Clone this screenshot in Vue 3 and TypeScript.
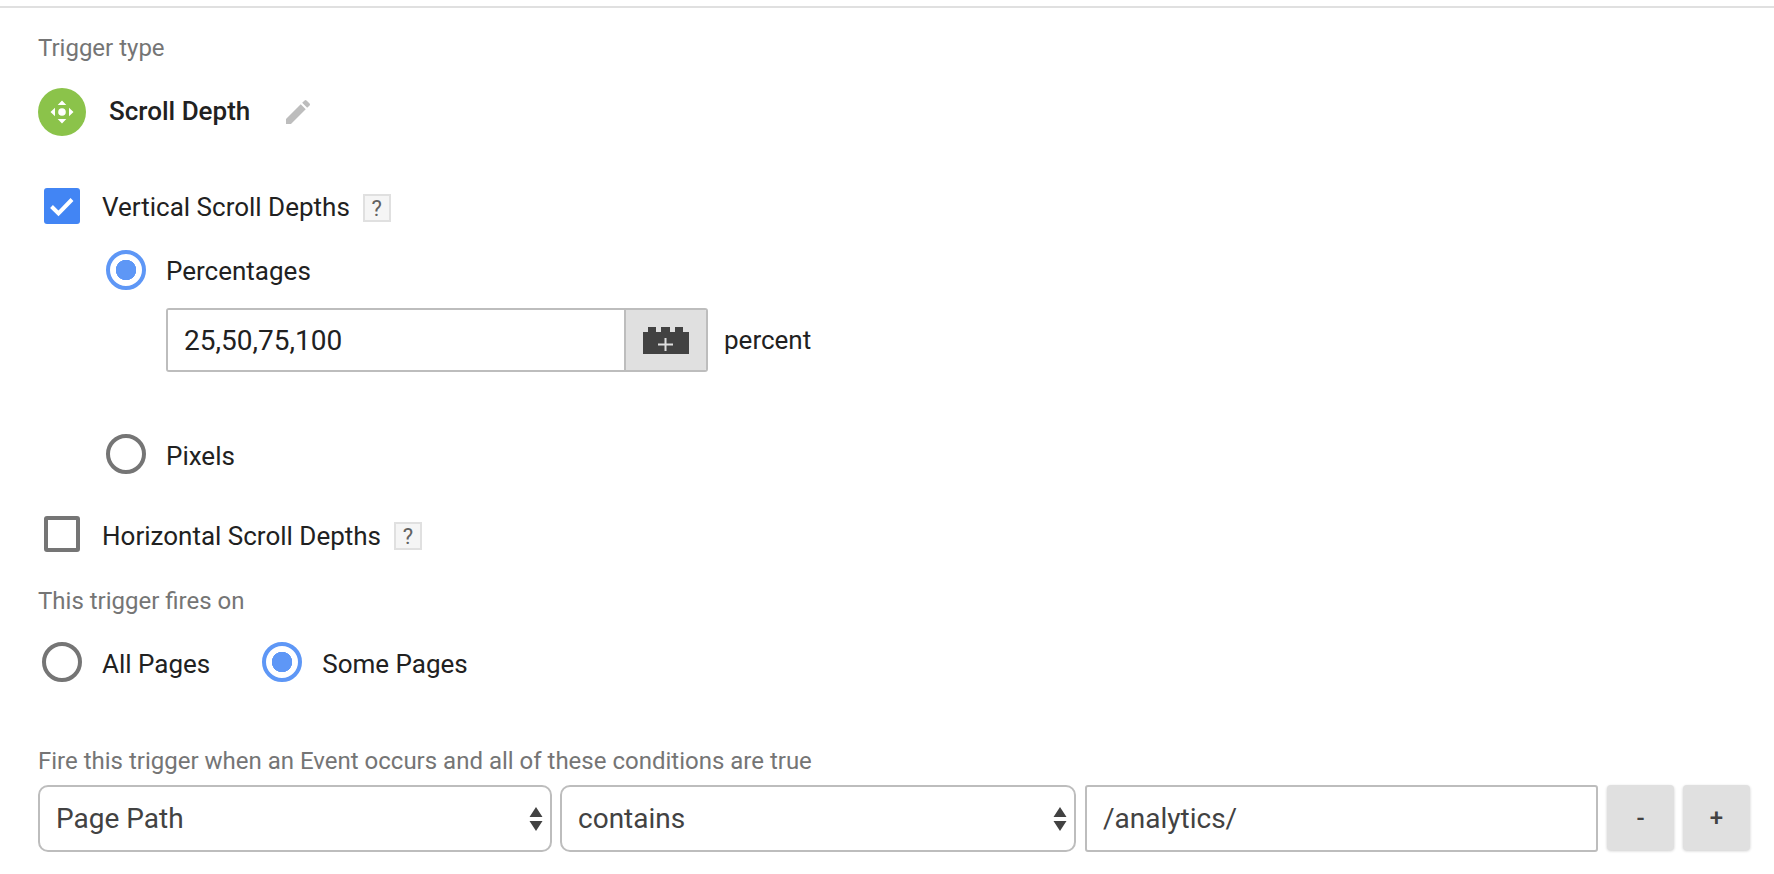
<script setup lang="ts">
interface Cond { kind: string; value: string; options: string[] }
const conditions: Cond[] = [
  { kind: 'first', value: 'Page Path', options: ['Page Path', 'Page URL', 'Referrer'] },
  { kind: 'second', value: 'contains', options: ['contains', 'equals', 'starts with'] },
]
</script>

<template>
  <main class="page">
    <div class="rule"></div>
    <section class="body">
      <div class="label first-label">Trigger type</div>

      <div class="type-row">
        <span class="type-icon">
          <svg viewBox="0 0 48 48" width="48" height="48">
            <circle cx="24" cy="24" r="24" fill="#8bc34a" />
            <circle cx="24" cy="24" r="3.8" fill="#fff" />
            <path d="M24 12.5l4.3 4.5h-8.6zM24 35.5l4.3-4.5h-8.6z" fill="#fff" />
            <path d="M12.5 24l4.5-4.3v8.6zM35.5 24l-4.5-4.3v8.6z" fill="#fff" />
          </svg>
        </span>
        <span class="type-name">Scroll Depth</span>
        <svg class="pencil" viewBox="0 0 24 24" width="32" height="32">
          <path fill="#bdbdbd" d="M3 17.25V21h3.75L17.81 9.94l-3.75-3.75L3 17.25zM20.71 7.04a1 1 0 0 0 0-1.41l-2.34-2.34a1 1 0 0 0-1.41 0l-1.83 1.83 3.75 3.75 1.83-1.83z" />
        </svg>
      </div>

      <div class="check-row vertical">
        <span class="check on">
          <svg viewBox="0 0 36 36" width="36" height="36">
            <path d="M7.5 18.5l7 7L28 11.5" fill="none" stroke="#fff" stroke-width="4" />
          </svg>
        </span>
        <span class="text">Vertical Scroll Depths</span>
        <span class="help">?</span>
      </div>

      <div class="nested">
        <div class="radio-row percent-radio">
          <span class="radio on"></span>
          <span class="text">Percentages</span>
        </div>
        <div class="depth-row">
          <div class="depth-field">
            <input class="depth-input" type="text" value="25,50,75,100" />
            <span class="var-btn">
              <svg viewBox="0 0 46 27" width="46" height="27">
                <path fill="#424242" d="M0 27V5h5V0h8v5h5V0h9v5h5V0h8v5h6v22z" />
                <path d="M22.5 11v13M15 17.5h15" stroke="#e0e0e0" stroke-width="2" />
              </svg>
            </span>
          </div>
          <span class="text unit">percent</span>
        </div>
        <div class="radio-row pixels-radio">
          <span class="radio"></span>
          <span class="text low">Pixels</span>
        </div>
      </div>

      <div class="check-row horizontal">
        <span class="check"></span>
        <span class="text low">Horizontal Scroll Depths</span>
        <span class="help">?</span>
      </div>

      <div class="label fires-label">This trigger fires on</div>

      <div class="fires-row">
        <div class="radio-row">
          <span class="radio"></span>
          <span class="text low">All Pages</span>
        </div>
        <div class="radio-row">
          <span class="radio on"></span>
          <span class="text low">Some Pages</span>
        </div>
      </div>

      <div class="label cond-label">Fire this trigger when an Event occurs and all of these conditions are true</div>

      <div class="cond-row">
        <div v-for="c in conditions" :key="c.kind" class="select-wrap">
          <select class="select">
            <option v-for="o in c.options" :key="o">{{ o }}</option>
          </select>
          <svg class="arrows" viewBox="0 0 14 24" width="14" height="24">
            <path fill="#424242" d="M7 0l6.5 10H.5zM7 24L.5 14h13z" />
          </svg>
        </div>
        <input class="cond-input" type="text" value="/analytics/" />
        <button class="btn" type="button">-</button>
        <button class="btn" type="button">+</button>
      </div>
    </section>
  </main>
</template>

<style scoped>
.page {
  width: 1774px;
  height: 874px;
  overflow: hidden;
  background: #fff;
  padding-top: 6px;
  box-sizing: border-box;
  font-family: Roboto, "Liberation Sans", sans-serif;
  color: #212121;
}
.rule {
  height: 2px;
  background: #e0e0e0;
}
.body {
  padding-left: 38px;
}
.label {
  font-size: 24px;
  line-height: 28px;
  color: #757575;
}
.first-label {
  margin-top: 26px;
}
.type-row {
  display: flex;
  align-items: center;
  height: 48px;
  margin-top: 26px;
}
.type-icon {
  display: block;
  width: 48px;
  height: 48px;
}
.type-name {
  margin-left: 23px;
  font-size: 26px;
  font-weight: 500;
  position: relative;
  top: -1px;
}
.pencil {
  margin-left: 32px;
}
.text {
  font-size: 26px;
  line-height: 28px;
  position: relative;
  top: 1px;
}
.text.low {
  top: 2px;
}
.check-row {
  display: flex;
  align-items: center;
  height: 36px;
  padding-left: 6px;
}
.vertical {
  margin-top: 52px;
}
.horizontal {
  margin-top: 42px;
}
.check {
  width: 36px;
  height: 36px;
  box-sizing: border-box;
  border: 4px solid #757575;
  border-radius: 3px;
  margin-right: 22px;
}
.check.on {
  border: none;
  background: #4285f4;
}
.check.on svg {
  display: block;
}
.help {
  width: 28px;
  height: 28px;
  box-sizing: border-box;
  margin-left: 13px;
  border: 2px solid #e0e0e0;
  background: #f5f5f5;
  color: #616161;
  font-size: 22px;
  line-height: 25px;
  text-align: center;
  position: relative;
  top: 2px;
}
.nested {
  padding-left: 68px;
}
.radio-row {
  display: flex;
  align-items: center;
  height: 40px;
}
.radio {
  width: 40px;
  height: 40px;
  box-sizing: border-box;
  border: 4px solid #757575;
  border-radius: 50%;
  margin-right: 20px;
  background: #fff;
}
.radio.on {
  border-color: #5e97f6;
  background: radial-gradient(circle, #5e97f6 0 10px, #fff 10.5px);
}
.percent-radio {
  margin-top: 26px;
}
.pixels-radio {
  margin-top: 62px;
}
.depth-row {
  display: flex;
  align-items: center;
  margin-top: 18px;
  margin-left: 60px;
}
.depth-field {
  display: flex;
  width: 542px;
  height: 64px;
  box-sizing: border-box;
  border: 2px solid #bdbdbd;
  border-radius: 3px;
  overflow: hidden;
}
.depth-input {
  flex: 1;
  min-width: 0;
  border: none;
  outline: none;
  padding: 0 0 0 16px;
  font: 28px Roboto, "Liberation Sans", sans-serif;
  color: #212121;
  background: #fff;
}
.var-btn {
  display: flex;
  align-items: center;
  justify-content: center;
  width: 80px;
  border-left: 2px solid #bdbdbd;
  background: #e0e0e0;
}
.unit {
  margin-left: 16px;
  top: 0;
}
.fires-label {
  margin-top: 35px;
}
.fires-row {
  display: flex;
  gap: 52px;
  margin-top: 27px;
  padding-left: 4px;
}
.cond-label {
  margin-top: 65px;
}
.cond-row {
  display: flex;
  gap: 9px;
  margin-top: 10px;
}
.select-wrap {
  position: relative;
  width: 514px;
  height: 67px;
}
.select-wrap + .select-wrap {
  width: 516px;
  margin-left: -1px;
}
.select {
  width: 100%;
  height: 100%;
  box-sizing: border-box;
  appearance: none;
  border: 2px solid #bdbdbd;
  border-radius: 10px;
  background: #fff;
  padding: 0 0 0 16px;
  font: 28px Roboto, "Liberation Sans", sans-serif;
  color: #424242;
  outline: none;
}
.arrows {
  position: absolute;
  right: 9px;
  top: 22px;
  pointer-events: none;
}
.cond-input {
  width: 513px;
  height: 67px;
  box-sizing: border-box;
  border: 2px solid #bdbdbd;
  border-radius: 3px;
  outline: none;
  padding: 0 0 0 16px;
  font: 28px Roboto, "Liberation Sans", sans-serif;
  color: #424242;
}
.btn {
  width: 67px;
  height: 65px;
  border: none;
  border-radius: 4px;
  background: #e0e0e0;
  box-shadow: 0 1px 3px rgba(0, 0, 0, 0.2);
  font: 500 24px Roboto, "Liberation Sans", sans-serif;
  color: #424242;
  padding: 0;
}
</style>
